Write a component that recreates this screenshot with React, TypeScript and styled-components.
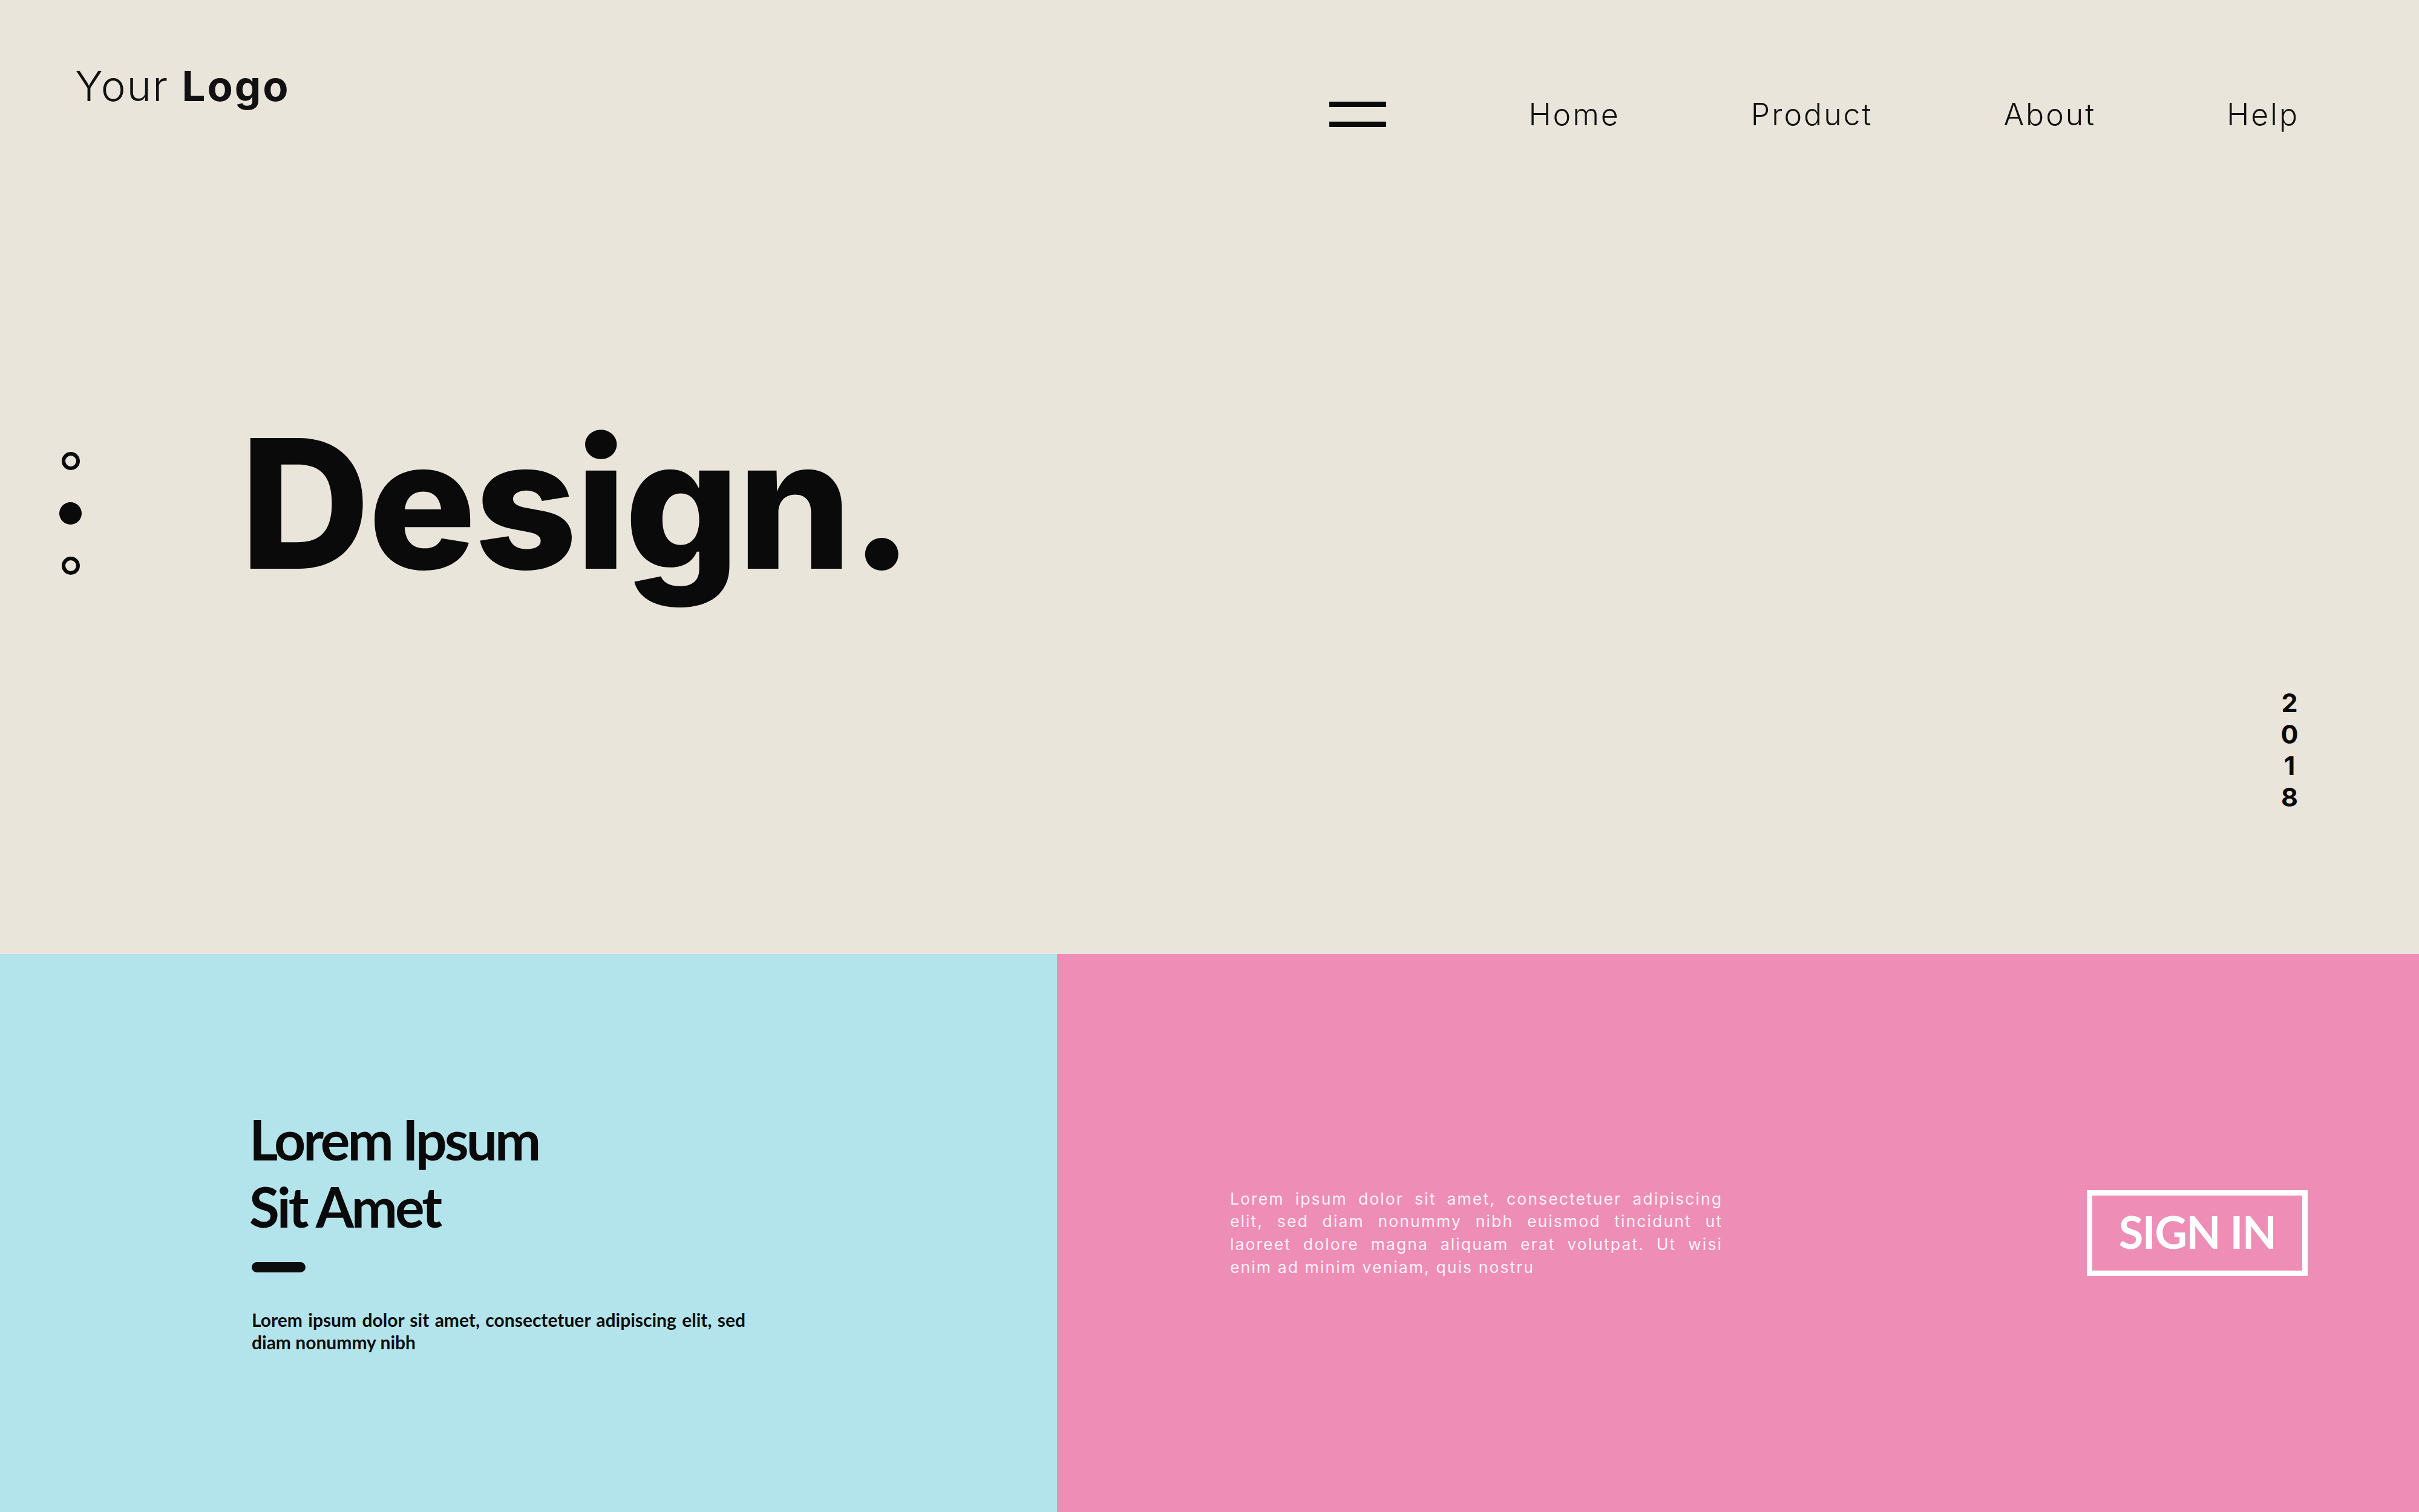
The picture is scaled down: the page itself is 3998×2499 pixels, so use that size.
import React from "react";
import styled, { createGlobalStyle } from "styled-components";

const GlobalStyle = createGlobalStyle`
  html, body {
    margin: 0;
    padding: 0;
    background: #e9e5db;
  }
  * {
    box-sizing: border-box;
  }
`;

const Page = styled.div`
  width: 3998px;
  height: 2499px;
  display: flex;
  flex-direction: column;
  overflow: hidden;
`;

const Top = styled.section`
  height: 1577px;
  background: #e9e5db;
  display: flex;
  flex-direction: column;
`;

const Header = styled.header`
  display: flex;
  justify-content: space-between;
  align-items: flex-start;
  padding: 108px 198px 0 124px;
`;

const Logo = styled.div`
  font-family: Inter, "Noto Sans", sans-serif;
  font-size: 69px;
  line-height: 1;
  font-weight: 300;
  letter-spacing: 2px;
  color: #111;
`;

const LogoStrong = styled.strong`
  font-weight: 700;
  letter-spacing: 3px;
`;

const Nav = styled.nav`
  display: flex;
  align-items: center;
  gap: 216px;
  margin-top: 56px;
`;

const Hamburger = styled.button`
  width: 94px;
  height: 42px;
  margin-right: 20px;
  display: flex;
  flex-direction: column;
  justify-content: space-between;
  background: none;
  border: 0;
  padding: 0;
  cursor: pointer;
`;

const Bar = styled.span`
  display: block;
  height: 9px;
  background: #0a0a0a;
`;

const NavLink = styled.a`
  font-family: Inter, "Noto Sans", sans-serif;
  font-weight: 300;
  font-size: 50px;
  line-height: 1;
  letter-spacing: 3px;
  color: #111;
  text-decoration: none;
`;

const Hero = styled.div`
  display: flex;
  align-items: flex-start;
  margin-top: 470px;
  padding-left: 98px;
`;

const Dots = styled.div`
  display: flex;
  flex-direction: column;
  align-items: center;
  gap: 53px;
  width: 37px;
  margin-top: 63px;
`;

const Dot = styled.span<{ $filled?: boolean }>`
  display: block;
  width: ${(p) => (p.$filled ? 37 : 30)}px;
  height: ${(p) => (p.$filled ? 37 : 30)}px;
  border-radius: 50%;
  border: ${(p) => (p.$filled ? "none" : "6px solid #0a0a0a")};
  background: ${(p) => (p.$filled ? "#0a0a0a" : "transparent")};
`;

const Title = styled.h1`
  margin: 0 0 0 262px;
  font-family: Inter, "Noto Sans", sans-serif;
  font-weight: 800;
  font-size: 297px;
  line-height: 1;
  letter-spacing: -3px;
  color: #0a0a0a;
`;

const YearRow = styled.div`
  display: flex;
  justify-content: flex-end;
  padding-right: 199px;
  margin-top: 154px;
`;

const Year = styled.div`
  display: flex;
  flex-direction: column;
  align-items: center;
  width: 30px;
  font-family: Inter, "Noto Sans", sans-serif;
  font-weight: 700;
  font-size: 43px;
  line-height: 52px;
  color: #0a0a0a;
`;

const Bottom = styled.section`
  display: flex;
  height: 922px;
`;

const InfoPanel = styled.div`
  width: 1747px;
  background: #b3e4eb;
  padding: 250px 0 0 412px;
`;

const Heading = styled.h2`
  margin: 0;
  font-family: Lato, "Noto Sans", sans-serif;
  font-weight: 700;
  font-size: 91px;
  line-height: 111px;
  letter-spacing: -4px;
  color: #0a0a0a;
`;

const Rule = styled.div`
  width: 89px;
  height: 17px;
  border-radius: 9px;
  background: #0d0d0d;
  margin: 37px 0 60px 4px;
`;

const Body = styled.div`
  width: 816px;
  margin-left: 4px;
  font-family: Lato, "Noto Sans", sans-serif;
  font-weight: 700;
  font-size: 30px;
  line-height: 37px;
  color: #0d0d0d;
`;

const JustLine = styled.span<{ $last?: boolean }>`
  display: block;
  white-space: nowrap;
  text-align: ${(p) => (p.$last ? "left" : "justify")};
  text-align-last: ${(p) => (p.$last ? "left" : "justify")};
`;

const ActionPanel = styled.div`
  flex: 1;
  background: #ee8db5;
  display: flex;
  align-items: center;
  justify-content: space-between;
  padding: 0 184px 0 286px;
`;

const PinkText = styled.div`
  width: 814px;
  font-family: Inter, "Noto Sans", sans-serif;
  font-weight: 400;
  font-size: 26.5px;
  line-height: 37.7px;
  letter-spacing: 2.1px;
  color: #fdf2f6;
`;

const SignIn = styled.button`
  width: 365px;
  height: 142px;
  border: 9px solid #ffffff;
  background: transparent;
  color: #ffffff;
  font-family: Lato, "Noto Sans", sans-serif;
  font-weight: 700;
  font-size: 74px;
  line-height: 1;
  letter-spacing: -1.5px;
  display: flex;
  align-items: center;
  justify-content: center;
  padding: 0 0 4px;
  cursor: pointer;
`;

const navItems = ["Home", "Product", "About", "Help"];

const blueLines = [
  "Lorem ipsum dolor sit amet, consectetuer adipiscing elit, sed",
  "diam nonummy nibh",
];

const pinkLines = [
  "Lorem ipsum dolor sit amet, consectetuer adipiscing",
  "elit, sed diam nonummy nibh euismod tincidunt ut",
  "laoreet dolore magna aliquam erat volutpat. Ut wisi",
  "enim ad minim veniam, quis nostru",
];

export default function App() {
  return (
    <>
      <GlobalStyle />
      <Page>
        <Top>
          <Header>
            <Logo>
              Your <LogoStrong>Logo</LogoStrong>
            </Logo>
            <Nav>
              <Hamburger aria-label="Menu">
                <Bar />
                <Bar />
              </Hamburger>
              {navItems.map((item) => (
                <NavLink key={item} href="#">
                  {item}
                </NavLink>
              ))}
            </Nav>
          </Header>
          <Hero>
            <Dots>
              <Dot />
              <Dot $filled />
              <Dot />
            </Dots>
            <Title>Design.</Title>
          </Hero>
          <YearRow>
            <Year>
              {"2018".split("").map((d, i) => (
                <span key={i}>{d}</span>
              ))}
            </Year>
          </YearRow>
        </Top>
        <Bottom>
          <InfoPanel>
            <Heading>
              Lorem Ipsum
              <br />
              Sit Amet
            </Heading>
            <Rule />
            <Body>
              {blueLines.map((l, i) => (
                <JustLine key={i} $last={i === blueLines.length - 1}>
                  {l}
                </JustLine>
              ))}
            </Body>
          </InfoPanel>
          <ActionPanel>
            <PinkText>
              {pinkLines.map((l, i) => (
                <JustLine key={i} $last={i === pinkLines.length - 1}>
                  {l}
                </JustLine>
              ))}
            </PinkText>
            <SignIn>SIGN IN</SignIn>
          </ActionPanel>
        </Bottom>
      </Page>
    </>
  );
}
